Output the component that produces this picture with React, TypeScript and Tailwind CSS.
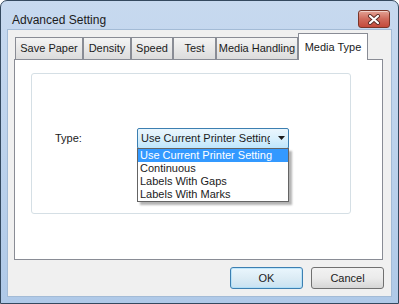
import React from 'react';

const tabs = [
  { label: 'Save Paper', w: 'w-[68px]' },
  { label: 'Density', w: 'w-[48px]' },
  { label: 'Speed', w: 'w-[42px]' },
  { label: 'Test', w: 'w-[43px]' },
  { label: 'Media Handling', w: 'w-[82px]' },
];

const options = ['Use Current Printer Setting', 'Continuous', 'Labels With Gaps', 'Labels With Marks'];

function CloseButton() {
  return (
    <div className="mt-[9px] flex h-[18px] w-[32px] items-center justify-center rounded-[3px] border border-[#7a3528] bg-gradient-to-b from-[#e3a295] via-[#cf6a5c] to-[#c4493a] shadow-[inset_0_1px_0_rgba(255,255,255,0.5)]">
      <svg width="14" height="11" viewBox="0 0 14 11">
        <path d="M3 2 L11 9 M11 2 L3 9" stroke="#5a2a24" strokeWidth="4" strokeLinecap="round" />
        <path d="M3 2 L11 9 M11 2 L3 9" stroke="#ffffff" strokeWidth="2.2" strokeLinecap="round" />
      </svg>
    </div>
  );
}

export default function App() {
  return (
    <div className="h-[304px] w-[399px] bg-white font-['Liberation_Sans',Arial,sans-serif]">
      <div className="flex h-full w-full flex-col rounded-t-[7px] border border-[#34495f] bg-gradient-to-b from-[#c7d9ef] via-[#bcd2ec] to-[#afc9e8]">
        {/* Title bar */}
        <div className="flex h-[29px] shrink-0 items-start justify-between pl-[11px] pr-[8px]">
          <span className="pt-[12px] text-[12px] leading-[14px] text-[#1b1b1b]">Advanced Setting</span>
          <CloseButton />
        </div>

        {/* Client area */}
        <div className="mx-[7px] flex h-[266px] flex-col bg-[#f0f0f0] shadow-[0_0_0_1px_#a3bbd6]">
          {/* Tab strip */}
          <div className="relative z-10 ml-[7px] mt-[3px] flex h-[26px] items-end text-[11px] text-[#1b1b1b]">
            {tabs.map((t) => (
              <div
                key={t.label}
                className={`${t.w} flex h-[22px] items-center justify-center border border-b-0 border-[#898c95] bg-gradient-to-b from-[#f4f4f4] to-[#dcdcdc] leading-[13px]`}
              >
                {t.label}
              </div>
            ))}
            <div className="-mb-px flex h-[27px] w-[70px] items-start justify-center border border-b-0 border-[#898c95] bg-white pt-[7px] leading-[13px]">
              Media Type
            </div>
          </div>

          {/* Tab panel */}
          <div className="ml-[6px] h-[201px] w-[369px] border border-[#898c95] bg-white pl-[16px] pt-[13px]">
            <div className="h-[141px] w-[320px] rounded-[3px] border border-[#d5dfe5] pl-[23px] pt-[54px]">
              <div className="flex items-center text-[11px] text-[#1b1b1b]">
                <span className="w-[82px] leading-[13px]">Type:</span>
                <div className="relative">
                  <div className="flex h-[21px] w-[152px] items-center rounded-[2px] border border-[#3c7fb1] bg-gradient-to-b from-[#eaf6fd] via-[#d9f0fc] to-[#bee6fd] pl-[3px]">
                    <span className="w-[129px] overflow-hidden whitespace-nowrap leading-[13px]">Use Current Printer Setting</span>
                    <svg width="8" height="5" viewBox="0 0 8 5" className="ml-[8px]">
                      <path d="M0 0 H7 L3.5 4 Z" fill="#1b1b1b" />
                    </svg>
                  </div>
                  {/* Open list */}
                  <div className="absolute left-0 top-[20px] w-[152px] border border-[#646464] bg-white shadow-[3px_3px_2px_rgba(0,0,0,0.3)]">
                    {options.map((o, i) => (
                      <div
                        key={o}
                        className={`h-[13px] whitespace-nowrap pl-[2px] leading-[13px] ${i === 0 ? 'bg-[#3399ff] text-white' : 'text-[#1b1b1b]'}`}
                      >
                        {o}
                      </div>
                    ))}
                  </div>
                </div>
              </div>
            </div>
          </div>

          {/* Buttons */}
          <div className="mt-[7px] flex justify-end gap-[8px] pr-[7px] text-[11px] text-[#1b1b1b]">
            <div className="flex h-[22px] w-[73px] items-center justify-center rounded-[3px] border border-[#3c7fb1] bg-gradient-to-b from-[#eaf6fd] via-[#dcecf5] to-[#c8e2f2] shadow-[inset_0_0_0_1px_rgba(160,220,250,0.6)]">
              OK
            </div>
            <div className="flex h-[22px] w-[73px] items-center justify-center rounded-[3px] border border-[#707070] bg-gradient-to-b from-[#f2f2f2] via-[#ebebeb] to-[#d6d6d6]">
              Cancel
            </div>
          </div>
        </div>
      </div>
    </div>
  );
}
